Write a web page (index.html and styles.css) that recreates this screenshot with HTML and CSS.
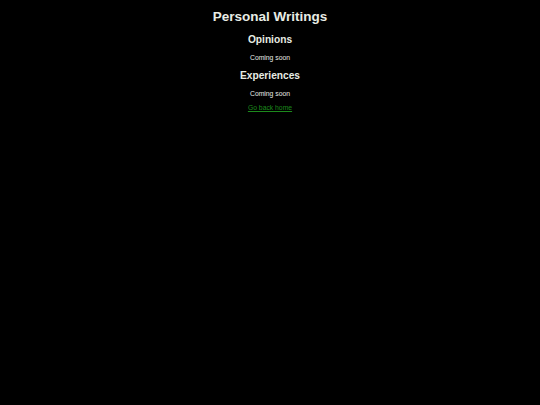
FILE: index.html
```html
<!DOCTYPE html>
<html lang="en">
<head>
<meta charset="utf-8">
<title>Personal Writings</title>
<link rel="stylesheet" href="styles.css">
</head>
<body>
<main class="page">
  <h1 class="title">Personal Writings</h1>
  <section class="section">
    <h2 class="section-title">Opinions</h2>
    <p class="note">Coming soon</p>
  </section>
  <section class="section">
    <h2 class="section-title">Experiences</h2>
    <p class="note">Coming soon</p>
  </section>
  <a class="home-link" href="#">Go back home</a>
</main>
</body>
</html>
```

FILE: styles.css
```css
html, body {
  margin: 0;
  padding: 0;
  background: #000;
}
body {
  font-family: "Liberation Sans", Arial, sans-serif;
  color: #e8ece4;
}
.page {
  display: flex;
  flex-direction: column;
  align-items: center;
  text-align: center;
  padding-top: 9px;
}
.title {
  margin: 0;
  font-size: 13.5px;
  line-height: 15px;
  font-weight: bold;
}
.section {
  display: flex;
  flex-direction: column;
  align-items: center;
}
.section-title {
  margin: 9.7px 0 0;
  font-size: 10.2px;
  line-height: 12px;
  font-weight: bold;
}
.section + .section .section-title {
  margin-top: 8px;
}
.note {
  margin: 8.3px 0 0;
  font-size: 6.8px;
  line-height: 8px;
}
.home-link {
  margin-top: 5.5px;
  font-size: 6.8px;
  line-height: 8px;
  color: #1c8a1c;
  text-decoration: underline;
}
```
